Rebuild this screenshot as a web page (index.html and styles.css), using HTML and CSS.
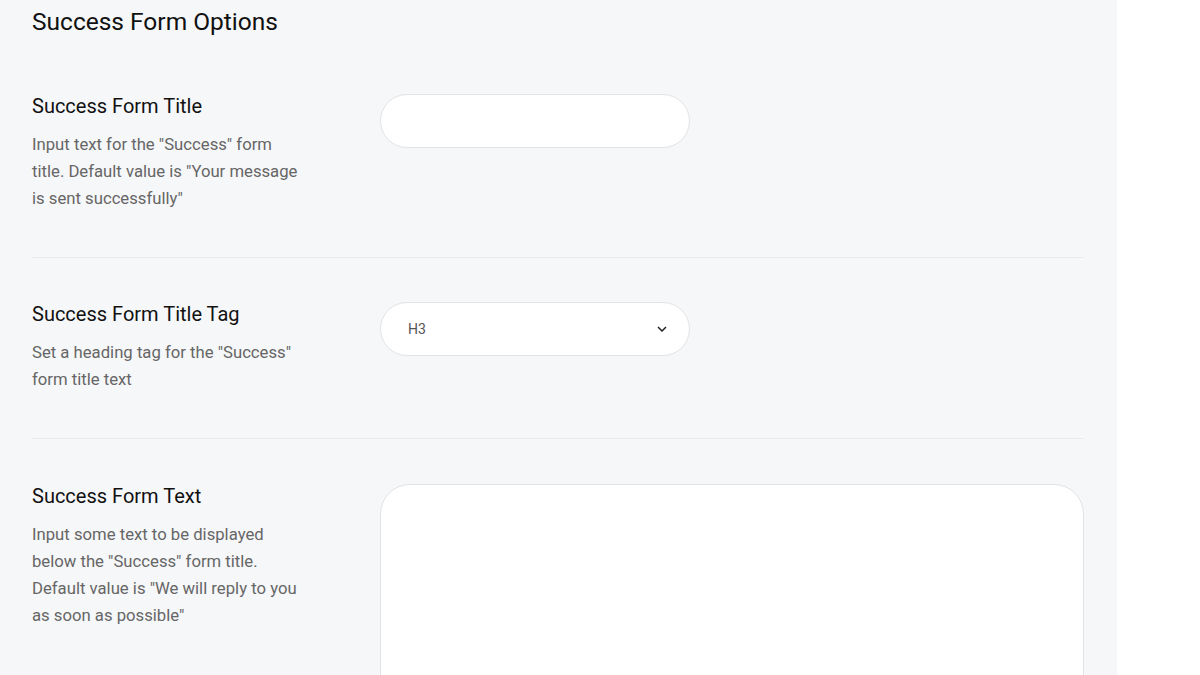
FILE: index.html
```html
<!DOCTYPE html>
<html lang="en">
<head>
  <meta charset="utf-8" />
  <title>Success Form Options</title>
  <meta name="viewport" content="width=device-width,initial-scale=1" />
  <link rel="stylesheet" href="styles.css">
</head>
<body>
  <div class="options-panel">
    <h1>Success Form Options</h1>

    <div class="option-row">
      <div class="option-info">
        <label for="success_title">Success Form Title</label>
        <p>Input text for the "Success" form title. Default value is "Your message is sent successfully"</p>
      </div>
      <div class="option-field">
        <input type="text" id="success_title" name="success_title">
      </div>
    </div>

    <div class="option-row">
      <div class="option-info">
        <label for="success_tag">Success Form Title Tag</label>
        <p>Set a heading tag for the "Success" form title text</p>
      </div>
      <div class="option-field">
        <div class="select-wrap">
          <select id="success_tag" name="success_tag">
            <option>H1</option>
            <option>H2</option>
            <option selected>H3</option>
            <option>H4</option>
            <option>H5</option>
            <option>H6</option>
          </select>
          <svg class="chevron" width="10" height="6" viewBox="0 0 10 6"><path d="M1 1l4 4 4-4" fill="none" stroke="#222" stroke-width="1.5"/></svg>
        </div>
      </div>
    </div>

    <div class="option-row wide">
      <div class="option-info">
        <label for="success_text">Success Form Text</label>
        <p>Input some text to be displayed below the "Success" form title. Default value is "We will reply to you as soon as possible"</p>
      </div>
      <div class="option-field">
        <textarea id="success_text" name="success_text"></textarea>
      </div>
    </div>
  </div>
</body>
</html>
```

FILE: styles.css
```css
body {
  background: #fff;
  font-family: Roboto, Arial, sans-serif;
  color: #111;
  margin: 0;
  padding: 0;
}
.options-panel {
  width: 1117px;
  min-height: 675px;
  box-sizing: border-box;
  background: #f6f7f9;
  padding: 0 33px 0 32px;
}
h1 {
  margin: 0;
  padding: 6px 0 12px;
  font-size: 24.5px;
  font-weight: 400;
  line-height: 32px;
  color: #111;
}
.option-row {
  display: grid;
  grid-template-columns: 348px 1fr;
  padding: 44px 0 45px;
  border-bottom: 1px solid #e9ebee;
}
.option-row.wide {
  border-bottom: none;
  padding-top: 45px;
}
.option-info {
  width: 276px;
}
.option-info label {
  display: block;
  font-size: 20px;
  line-height: 24px;
  color: #111;
  margin-bottom: 13px;
}
.option-info p {
  margin: 0;
  font-size: 16.7px;
  line-height: 27px;
  color: #666;
}
.option-field input,
.option-field select {
  display: block;
  width: 310px;
  height: 54px;
  box-sizing: border-box;
  border: 1px solid #e2e3e5;
  border-radius: 27px;
  background: #fff;
  font-family: Roboto, Arial, sans-serif;
  font-size: 14px;
  color: #555;
  padding: 0 27px;
  outline: none;
}
.select-wrap {
  position: relative;
  width: 310px;
}
.option-field select {
  -webkit-appearance: none;
  appearance: none;
}
.chevron {
  position: absolute;
  right: 23px;
  top: 24px;
  pointer-events: none;
}
.option-field textarea {
  display: block;
  width: 100%;
  height: 240px;
  box-sizing: border-box;
  border: 1px solid #e2e3e5;
  border-radius: 30px;
  background: #fff;
  resize: none;
  outline: none;
}
```
